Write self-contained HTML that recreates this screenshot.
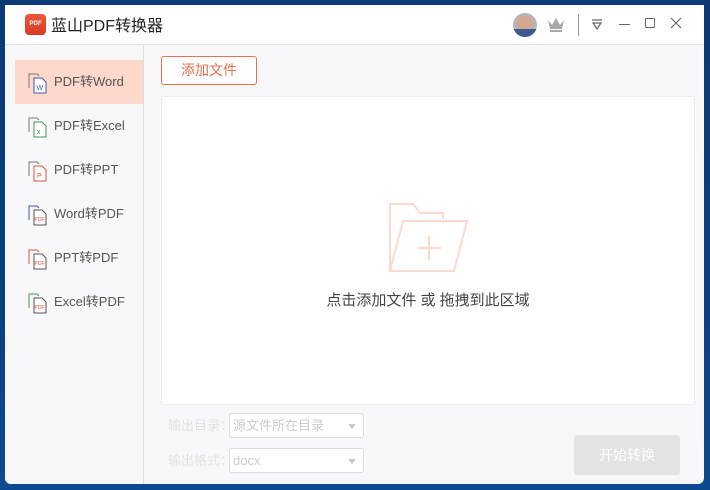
<!DOCTYPE html>
<html><head><meta charset="utf-8"><style>
*{margin:0;padding:0;box-sizing:border-box}
body{width:710px;height:490px;overflow:hidden;background:linear-gradient(180deg,#0b3a75 0%,#0a3f80 60%,#0d4a92 100%);font-family:"Liberation Sans","Noto Sans CJK SC",sans-serif;position:relative}
.win{position:absolute;left:5px;top:5px;width:699px;height:479px;background:#f8f7fa;border-radius:0 0 6px 6px;overflow:hidden}
.title{position:absolute;left:0;top:0;width:699px;height:40px;background:#fff;border-bottom:1px solid #e1e1e1}
.logo{position:absolute;left:20px;top:9px;width:21px;height:21px;border-radius:4px;background:linear-gradient(#f0583a,#d93a25);color:#fff;font-size:6px;font-weight:bold;text-align:center;line-height:21px}
.ttext{position:absolute;left:46px;top:7px;font-size:16px;color:#222}
.side{position:absolute;left:0;top:41px;width:139px;height:438px;background:#f8f7fa;border-right:1px solid #ddd}
.item{position:absolute;left:10px;width:128px;height:44px;font-size:13px;color:#555;line-height:44px;padding-left:39px}
.item.act{background:#fdd9cc}
.ic{position:absolute;left:12px;top:12px}
.btn{position:absolute;left:156px;top:51px;width:96px;height:29px;border:1px solid #e8704f;border-radius:3px;background:#fff;color:#e8704f;font-size:14px;text-align:center;line-height:27px}
.drop{position:absolute;left:156px;top:91px;width:534px;height:309px;background:#fff;border:1px solid #eee}
.hint{position:absolute;left:0;width:100%;top:192px;text-align:center;font-size:15px;color:#444}
.lbl{position:absolute;left:163px;font-size:13px;color:#e2e2e2}
.sel{position:absolute;left:224px;width:135px;height:25px;border:1px solid #ddd;border-radius:3px;background:#fff;font-size:13px;color:#ccc;line-height:23px;padding-left:3px}
.sel:after{content:"";position:absolute;right:7px;top:10px;border:4px solid transparent;border-top:5px solid #ccc}
.go{position:absolute;left:569px;top:430px;width:106px;height:40px;background:#e3e2e5;border-radius:3px;color:#fff;font-size:14px;text-align:center;line-height:40px}
</style></head><body>
<div class="win">
 <div class="title">
  <div class="logo">PDF</div>
  <div class="ttext">蓝山PDF转换器</div>
  <div style="position:absolute;left:508px;top:8px;width:24px;height:24px;border-radius:50%;overflow:hidden;background:#b9b3b3"><div style="position:absolute;left:4px;top:3px;width:15px;height:15px;border-radius:50%;background:#d4a792"></div><div style="position:absolute;left:0;top:16px;width:24px;height:10px;background:#3d5a8e"></div></div>
  <svg style="position:absolute;left:541px;top:11px" width="20" height="16" viewBox="0 0 20 16"><path d="M2 4 L6 9 L10 2 L14 9 L18 4 L16 13 H4 Z" fill="#a9a9a9"/><rect x="4" y="14" width="12" height="2" fill="#a9a9a9"/></svg>
  <div style="position:absolute;left:573px;top:9px;width:1px;height:22px;background:#999"></div>
  <svg style="position:absolute;left:585px;top:12px" width="14" height="14" viewBox="0 0 14 14" fill="none" stroke="#666" stroke-width="1.2"><path d="M2 3H12M3 6H11L7 12Z"/></svg>
  <div style="position:absolute;left:614px;top:19px;width:11px;height:1px;background:#666"></div>
  <div style="position:absolute;left:640px;top:13px;width:10px;height:10px;border:1.2px solid #666;border-radius:1px"></div>
  <svg style="position:absolute;left:665px;top:12px" width="12" height="12" viewBox="0 0 12 12" stroke="#666" stroke-width="1.2"><path d="M1 1L11 11M11 1L1 11"/></svg>
 </div>
 <div class="side">
  <div class="item act" style="top:14px"><svg class="ic" width="22" height="22" viewBox="0 0 22 22" fill="none"><path d="M2 16V2H10L12 4" stroke="#777"/><path d="M7 6H15L19 10V21H7Z" stroke="#3a5aa8" fill="#fff"/><text x="9.5" y="18" font-size="7" fill="#3a5aa8" font-family="Liberation Sans">W</text></svg>PDF转Word</div>
  <div class="item" style="top:58px"><svg class="ic" width="22" height="22" viewBox="0 0 22 22" fill="none"><path d="M2 16V2H10L12 4" stroke="#777"/><path d="M7 6H15L19 10V21H7Z" stroke="#3b9a4a" fill="#fff"/><text x="10" y="18" font-size="7" fill="#3b9a4a" font-family="Liberation Sans">x</text></svg>PDF转Excel</div>
  <div class="item" style="top:102px"><svg class="ic" width="22" height="22" viewBox="0 0 22 22" fill="none"><path d="M2 16V2H10L12 4" stroke="#777"/><path d="M7 6H15L19 10V21H7Z" stroke="#d9573a" fill="#fff"/><text x="10" y="18" font-size="7" fill="#d9573a" font-family="Liberation Sans">P</text></svg>PDF转PPT</div>
  <div class="item" style="top:146px"><svg class="ic" width="22" height="22" viewBox="0 0 22 22" fill="none"><path d="M2 16V2H10L12 4" stroke="#3a5aa8"/><path d="M7 6H15L19 10V21H7Z" stroke="#555" fill="#fff"/><text x="7.5" y="17" font-size="5" fill="#d9573a" font-family="Liberation Sans">PDF</text></svg>Word转PDF</div>
  <div class="item" style="top:190px"><svg class="ic" width="22" height="22" viewBox="0 0 22 22" fill="none"><path d="M2 16V2H10L12 4" stroke="#d9573a"/><path d="M7 6H15L19 10V21H7Z" stroke="#555" fill="#fff"/><text x="7.5" y="17" font-size="5" fill="#d9573a" font-family="Liberation Sans">PDF</text></svg>PPT转PDF</div>
  <div class="item" style="top:234px"><svg class="ic" width="22" height="22" viewBox="0 0 22 22" fill="none"><path d="M2 16V2H10L12 4" stroke="#3b9a4a"/><path d="M7 6H15L19 10V21H7Z" stroke="#555" fill="#fff"/><text x="7.5" y="17" font-size="5" fill="#d9573a" font-family="Liberation Sans">PDF</text></svg>Excel转PDF</div>
 </div>
 <div class="btn">添加文件</div>
 <div class="drop">
  <svg style="position:absolute;left:225px;top:104px" width="82" height="72" viewBox="0 0 82 72" fill="none" stroke="#fcd9cc" stroke-width="2"><path d="M3 70V3H26L33 12H56V18"/><path d="M3 70L16 20H80L67 70Z"/><path d="M42 35V59M30 47H54"/></svg>
  <div class="hint">点击添加文件 或 拖拽到此区域</div>
 </div>
 <div class="lbl" style="top:410px">输出目录：</div>
 <div class="sel" style="top:408px">源文件所在目录</div>
 <div class="lbl" style="top:445px">输出格式：</div>
 <div class="sel" style="top:443px">docx</div>
 <div class="go">开始转换</div>
</div>
</body></html>
